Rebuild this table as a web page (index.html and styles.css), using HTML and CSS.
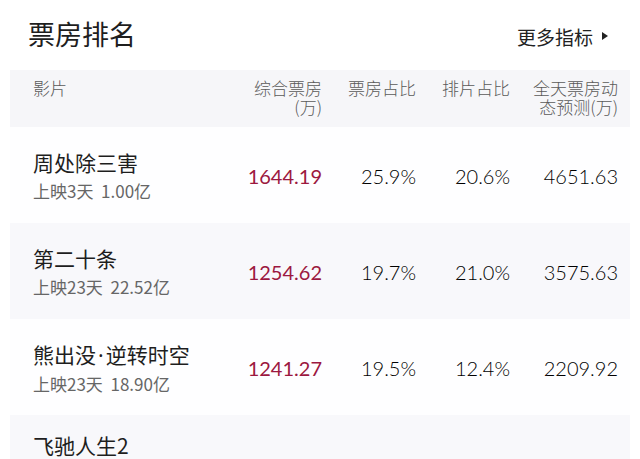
FILE: index.html
```html
<!DOCTYPE html>
<html lang="zh-CN">
<head>
<meta charset="utf-8">
<link rel="stylesheet" href="styles.css">
</head>
<body>
<div class="page">
  <div class="topbar">
    <h1 class="title">票房排名</h1>
    <div class="more">更多指标<span class="tri"></span></div>
  </div>
  <div class="table">
    <div class="row head">
      <div class="cell film">影片</div>
      <div class="cell num">综合票房<br>(万)</div>
      <div class="cell num">票房占比</div>
      <div class="cell num">排片占比</div>
      <div class="cell num">全天票房动<br>态预测(万)</div>
    </div>
    <div class="row">
      <div class="cell film"><div class="name">周处除三害</div><div class="sub">上映3天&nbsp;&nbsp;1.00亿</div></div>
      <div class="cell num red">1644.19</div>
      <div class="cell num">25.9%</div>
      <div class="cell num">20.6%</div>
      <div class="cell num">4651.63</div>
    </div>
    <div class="row alt">
      <div class="cell film"><div class="name">第二十条</div><div class="sub">上映23天&nbsp;&nbsp;22.52亿</div></div>
      <div class="cell num red">1254.62</div>
      <div class="cell num">19.7%</div>
      <div class="cell num">21.0%</div>
      <div class="cell num">3575.63</div>
    </div>
    <div class="row">
      <div class="cell film"><div class="name">熊出没<span class="dot">·</span>逆转时空</div><div class="sub">上映23天&nbsp;&nbsp;18.90亿</div></div>
      <div class="cell num red">1241.27</div>
      <div class="cell num">19.5%</div>
      <div class="cell num">12.4%</div>
      <div class="cell num">2209.92</div>
    </div>
    <div class="row alt last">
      <div class="cell film"><div class="name">飞驰人生2</div></div>
      <div class="cell num red"></div>
      <div class="cell num"></div>
      <div class="cell num"></div>
      <div class="cell num"></div>
    </div>
  </div>
</div>
</body>
</html>
```
FILE: styles.css
```css
html, body {
  margin: 0;
  padding: 0;
  background: #ffffff;
  overflow: hidden;
}
body {
  font-family: "Noto Sans CJK SC", "Noto Sans", sans-serif;
  color: #1e1e1e;
  width: 640px;
  height: 459px;
}
.page {
  padding: 0 10px;
}
.topbar {
  height: 70px;
  display: flex;
  align-items: center;
  justify-content: space-between;
  padding: 0 22px 0 18px;
}
.title {
  margin: 0;
  font-size: 27px;
  font-weight: 400;
  line-height: 1;
  color: #1e1e1e;
  position: relative;
  top: -2px;
}
.more {
  font-size: 19px;
  line-height: 1;
  color: #222;
  display: flex;
  align-items: center;
  gap: 9px;
  position: relative;
  top: 1px;
}
.tri {
  width: 0;
  height: 0;
  border-left: 6px solid #222;
  border-top: 4.5px solid transparent;
  border-bottom: 4.5px solid transparent;
}
.table {
  display: flex;
  flex-direction: column;
}
.row {
  display: grid;
  grid-template-columns: 1fr 94px 94px 94px 108px;
  height: 96px;
  padding: 0 12px 0 23px;
  align-items: center;
  background: #fefeff;
}
.row.alt {
  background: #f8f8fb;
}
.row.last {
  align-items: start;
  padding-top: 16px;
  box-sizing: border-box;
}
.row.head {
  height: 57px;
  background: #f6f6f9;
  align-items: start;
  padding-top: 8px;
  box-sizing: border-box;
  font-size: 17px;
  line-height: 19px;
  color: #5a5a5a;
  font-weight: 300;
}
.cell.num {
  text-align: right;
}
.row:not(.head) .cell.num {
  font-family: "Lato", "Noto Sans", sans-serif;
  font-size: 20px;
  font-weight: 300;
  color: #000;
  padding-top: 2px;
}
.row:not(.head) .cell.num.red {
  color: #9c1840;
  font-weight: 400;
}
.name {
  font-size: 21px;
  line-height: 28px;
  color: #1e1e1e;
}
.dot {
  font-family: "Noto Sans", sans-serif;
  margin: 0 2px;
}
.sub {
  font-size: 17px;
  line-height: 22px;
  color: #666;
  margin-top: 4px;
}
```
